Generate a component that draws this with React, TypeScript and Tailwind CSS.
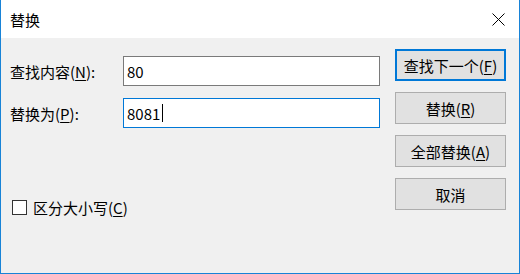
const font = { fontFamily: '"Noto Sans CJK SC", "Noto Sans", sans-serif' };

const Mn = ({ c }: { c: string }) => (
  <>
    (<span className="underline underline-offset-[2px] decoration-[1px]">{c}</span>)
  </>
);

const Btn = ({ children, primary }: { children: React.ReactNode; primary?: boolean }) => (
  <button
    className={
      primary
        ? "flex h-[32px] w-[111px] items-center justify-center border-2 border-[#0078d7] bg-[#e1e1e1] text-[15px] leading-none text-black"
        : "flex h-[32px] w-[111px] items-center justify-center border border-[#adadad] bg-[#e1e1e1] text-[15px] leading-none text-black"
    }
  >
    {children}
  </button>
);

const App = () => {
  return (
    <div
      className="flex h-[274px] w-[520px] flex-col border-x border-b border-[#1883d7] bg-[#f0f0f0] text-black"
      style={font}
    >
      <div className="flex h-[38px] shrink-0 items-center justify-between bg-white pl-[9px] pr-[14px]">
        <span className="text-[15px] leading-none">替换</span>
        <svg width="13" height="13" viewBox="0 0 13 13" className="mt-[1px]">
          <path d="M0.5 0.5 L12.5 12.5 M12.5 0.5 L0.5 12.5" stroke="#000" strokeWidth="1" />
        </svg>
      </div>
      <div className="flex flex-1">
        <div className="flex flex-1 flex-col pl-[9px] pt-[18px]">
          <div className="flex h-[30px] items-center">
            <span className="w-[113px] text-[15px] leading-none">
              查找内容<Mn c="N" />:
            </span>
            <div className="flex h-[30px] w-[257px] items-center border border-[#7a7a7a] bg-white pl-[3px] text-[15px] leading-none">
              80
            </div>
          </div>
          <div className="mt-[12px] flex h-[30px] items-center">
            <span className="w-[113px] text-[15px] leading-none">
              替换为<Mn c="P" />:
            </span>
            <div className="flex h-[30px] w-[257px] items-center border border-[#0078d7] bg-white pl-[3px] text-[15px] leading-none">
              8081
              <span className="ml-[2px] h-[18px] w-[1px] bg-black" />
            </div>
          </div>
          <div className="ml-[2px] mt-[72px] flex items-center">
            <span className="h-[15px] w-[15px] border border-[#333333] bg-white" />
            <span className="ml-[6px] text-[15px] leading-none">
              区分大小写<Mn c="C" />
            </span>
          </div>
        </div>
        <div className="flex flex-col gap-[11px] pr-[13px] pt-[11px]">
          <Btn primary>
            查找下一个<Mn c="F" />
          </Btn>
          <Btn>
            替换<Mn c="R" />
          </Btn>
          <Btn>
            全部替换<Mn c="A" />
          </Btn>
          <Btn>取消</Btn>
        </div>
      </div>
    </div>
  );
};

export default App;
